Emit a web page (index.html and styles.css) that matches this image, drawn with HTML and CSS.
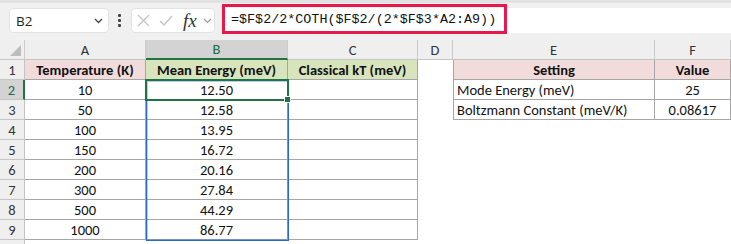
FILE: index.html
```html
<!DOCTYPE html>
<html>
<head>
    <title>Mean Energy Sheet</title>
    <meta name="viewport" content="width=device-width, initial-scale=1.0">
    <link rel="stylesheet" href="styles.css">
</head>
<body>
    <!-- Formula bar -->
    <div class="topbar">
        <div class="namebox">
            <span>B2</span>
            <svg class="chev" width="9" height="6" viewBox="0 0 9 6"><path d="M1 1 L4.5 4.5 L8 1" fill="none" stroke="#444" stroke-width="1.3"/></svg>
        </div>
        <div class="dots"><i></i><i></i><i></i></div>
        <div class="fxbox">
            <svg class="ico" width="13" height="13" viewBox="0 0 13 13"><path d="M1 1 L12 12 M12 1 L1 12" stroke="#c4c4c4" stroke-width="1.3"/></svg>
            <svg class="ico" width="14" height="13" viewBox="0 0 14 13"><path d="M1 7 L5 11 L13 2" fill="none" stroke="#c4c4c4" stroke-width="1.3"/></svg>
            <span class="fx">fx</span>
            <svg class="chev" width="9" height="6" viewBox="0 0 9 6"><path d="M1 1 L4.5 4.5 L8 1" fill="none" stroke="#9a9a9a" stroke-width="1.2"/></svg>
        </div>
        <div class="formula">
            <span class="hl">=$F$2/2*COTH($F$2/(2*$F$3*A2:A9))</span>
        </div>
    </div>

    <!-- Sheet grid -->
    <div class="sheet">
        <div class="h corner"><span class="tri"></span></div>
        <div class="h">A</div>
        <div class="h on">B</div>
        <div class="h">C</div>
        <div class="h">D</div>
        <div class="h">E</div>
        <div class="h">F</div>

        <div class="rh">1</div>
        <div class="c bd pink b">Temperature (K)</div>
        <div class="c bd green b">Mean Energy (meV)</div>
        <div class="c bd green b">Classical kT (meV)</div>
        <div class="c"></div>
        <div class="c bd bl pink b">Setting</div>
        <div class="c bd pink b">Value</div>

        <div class="rh on">2</div>
        <div class="c bd">10</div>
        <div class="c bd">12.50</div>
        <div class="c bd"></div>
        <div class="c"></div>
        <div class="c bd bl l">Mode Energy (meV)</div>
        <div class="c bd">25</div>

        <div class="rh">3</div>
        <div class="c bd">50</div>
        <div class="c bd">12.58</div>
        <div class="c bd"></div>
        <div class="c"></div>
        <div class="c bd bl l">Boltzmann Constant (meV/K)</div>
        <div class="c bd">0.08617</div>

        <div class="rh">4</div>
        <div class="c bd">100</div>
        <div class="c bd">13.95</div>
        <div class="c bd"></div>
        <div class="c"></div><div class="c"></div><div class="c"></div>

        <div class="rh">5</div>
        <div class="c bd">150</div>
        <div class="c bd">16.72</div>
        <div class="c bd"></div>
        <div class="c"></div><div class="c"></div><div class="c"></div>

        <div class="rh">6</div>
        <div class="c bd">200</div>
        <div class="c bd">20.16</div>
        <div class="c bd"></div>
        <div class="c"></div><div class="c"></div><div class="c"></div>

        <div class="rh">7</div>
        <div class="c bd">300</div>
        <div class="c bd">27.84</div>
        <div class="c bd"></div>
        <div class="c"></div><div class="c"></div><div class="c"></div>

        <div class="rh">8</div>
        <div class="c bd">500</div>
        <div class="c bd">44.29</div>
        <div class="c bd"></div>
        <div class="c"></div><div class="c"></div><div class="c"></div>

        <div class="rh">9</div>
        <div class="c bd">1000</div>
        <div class="c bd">86.77</div>
        <div class="c bd"></div>
        <div class="c"></div><div class="c"></div><div class="c"></div>

        <div class="rh short"></div>

        <!-- range highlight + active cell -->
        <div class="range"></div>
        <div class="active"><span class="handle"></span></div>
    </div>
</body>
</html>
```

FILE: styles.css
```css
body {
    margin: 0;
    width: 731px;
    height: 244px;
    overflow: hidden;
    background: #fff;
    font-family: Calibri, Carlito, Lato, sans-serif;
}
.topbar {
    border-top: 3px solid #e2e2e2;
    background: #f0f0f0;
    display: flex;
    align-items: flex-start;
    padding: 5px 0 0 9px;
    height: 32px;
}
.namebox {
    width: 100px;
    height: 25px;
    box-sizing: border-box;
    background: #fff;
    border: 1px solid #e3e3e3;
    border-radius: 4px;
    display: flex;
    align-items: center;
    justify-content: space-between;
    padding: 0 5px 0 6px;
    font-family: "Open Sans", sans-serif;
    font-size: 13.5px;
    color: #222;
}
.dots {
    width: 3px;
    margin: 6px 10px 0 9px;
    display: flex;
    flex-direction: column;
    gap: 2px;
}
.dots i {
    width: 3px;
    height: 3px;
    background: #444;
    border-radius: 1px;
}
.fxbox {
    width: 84px;
    height: 25px;
    box-sizing: border-box;
    background: #fff;
    border: 1px solid #e3e3e3;
    border-radius: 4px;
    display: flex;
    align-items: center;
    padding: 0 2px 0 5px;
    gap: 8px;
}
.fxbox .ico + .ico {
    margin-left: 1px;
}
.fx {
    font-family: "Liberation Serif", serif;
    font-style: italic;
    font-size: 19px;
    color: #333;
    margin-left: 2px;
    margin-right: -2px;
    line-height: 1;
}
.formula {
    flex: 1;
    height: 25px;
    margin-left: 7px;
    background: #fff;
    display: flex;
    align-items: center;
}
.hl {
    height: 30px;
    box-sizing: border-box;
    margin-top: -3px;
    border: 3px solid #e6194b;
    padding: 0 8px 0 6px;
    display: flex;
    align-items: center;
    font-family: "Liberation Mono", monospace;
    font-size: 13.4px;
    color: #111;
}

.sheet {
    position: relative;
    display: grid;
    grid-template-columns: 25px 121px 142px 130px 35px 202px 76px;
    grid-auto-rows: 20px;
    font-size: 14.5px;
    color: #111;
}
.h {
    background: #efefef;
    border-right: 1px solid #cbcbcb;
    border-bottom: 1px solid #c4c4c4;
    box-sizing: border-box;
    display: flex;
    align-items: center;
    justify-content: center;
    color: #333;
}
.h.on {
    background: #d3d3d3;
    color: #1e6b41;
    border-bottom: 2px solid #217346;
}
.corner {
    position: relative;
}
.tri {
    position: absolute;
    right: 3px;
    bottom: 3px;
    width: 0;
    height: 0;
    border-left: 11px solid transparent;
    border-bottom: 11px solid #bdbdbd;
}
.rh {
    background: #efefef;
    border-right: 1px solid #c4c4c4;
    border-bottom: 1px solid #c4c4c4;
    box-sizing: border-box;
    display: flex;
    align-items: center;
    justify-content: center;
    color: #333;
}
.rh.short {
    height: 4px;
    border-bottom: none;
}
.rh.on {
    background: #d3d3d3;
    color: #1e6b41;
    border-right: 2px solid #217346;
}
.c {
    box-sizing: border-box;
    display: flex;
    align-items: center;
    justify-content: center;
    white-space: nowrap;
    overflow: hidden;
}
.bd {
    border-right: 1px solid #a6a6a6;
    border-bottom: 1px solid #a6a6a6;
}
.bl {
    border-left: 1px solid #a6a6a6;
}
.l {
    justify-content: flex-start;
    padding-left: 3px;
}
.b {
    font-weight: bold;
}
.pink {
    background: #f2dcdb;
}
.green {
    background: #d8e4bc;
}
.range {
    position: absolute;
    left: 146px;
    top: 40px;
    width: 143px;
    height: 161px;
    box-sizing: border-box;
    border: 1px solid #2a68d2;
    box-shadow: inset 0 0 0 1px rgba(52, 112, 214, 0.35);
}
.active {
    position: absolute;
    left: 145px;
    top: 39px;
    width: 144px;
    height: 22px;
    box-sizing: border-box;
    border: 2px solid #217346;
}
.handle {
    position: absolute;
    right: -4px;
    bottom: -4px;
    width: 5px;
    height: 5px;
    background: #217346;
    border: 1px solid #fff;
}
```
